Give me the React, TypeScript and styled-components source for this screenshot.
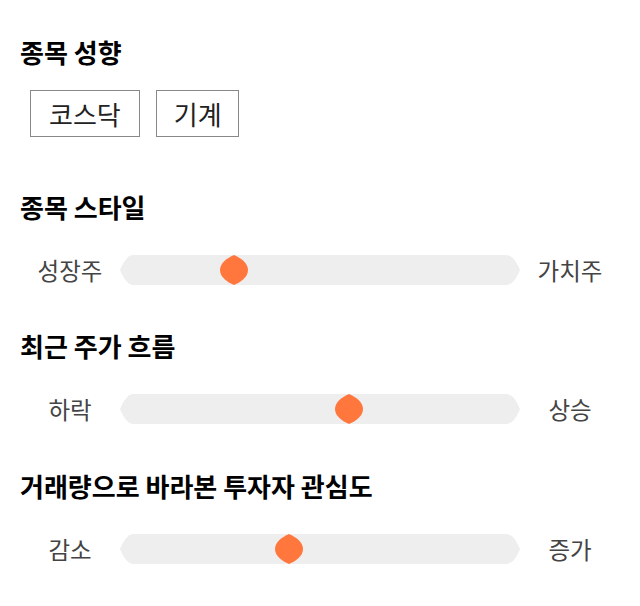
import React from 'react';
import styled, { createGlobalStyle } from 'styled-components';

const GlobalStyle = createGlobalStyle`
  html, body {
    margin: 0;
    padding: 0;
    background: #fff;
  }
  body {
    font-family: 'Noto Sans CJK KR', 'Noto Sans', sans-serif;
  }
`;

// Styles
const Page = styled.div`
  width: 600px;
  padding: 36px 20px 0;
`;

const Section = styled.section<{ $gap: number }>`
  margin-top: ${(p) => p.$gap}px;

  &:first-child {
    margin-top: 0;
  }
`;

const Title = styled.h2`
  margin: 0;
  font-size: 26px;
  line-height: 32px;
  font-weight: 700;
  color: #000;
`;

const TagList = styled.div`
  display: flex;
  gap: 16px;
  margin-top: 22px;
  padding-left: 10px;
`;

const Tag = styled.div`
  padding: 0 18px 0 18px;
  height: 47px;
  box-sizing: border-box;
  border: 1px solid #888;
  display: flex;
  align-items: center;
  font-size: 26px;
  color: #222;

  & + & {
    padding: 0 16px 0 17px;
  }
`;

const SliderRow = styled.div`
  display: grid;
  grid-template-columns: 100px 400px 100px;
  align-items: center;
  margin-top: 32px;
`;

const Side = styled.span`
  text-align: center;
  font-size: 23.5px;
  line-height: 30px;
  color: #444;
`;

const Track = styled.div`
  position: relative;
  height: 30px;
`;

const TrackFill = styled.div`
  height: 30px;
  background: #eee;
  clip-path: path('M14,0 H386 C393,0 397,8 400,15 C397,22 393,30 386,30 H14 C7,30 3,22 0,15 C3,8 7,0 14,0 Z');
`;

const Thumb = styled.div`
  position: absolute;
  top: 0;
  width: 28px;
  height: 30px;
  transform: translateX(-50%);
  background: #ff773d;
  clip-path: path('M14,0 C21,3 28,8 28,15 C28,22 21,27 14,30 C7,27 0,22 0,15 C0,8 7,3 14,0 Z');
`;

const tags = ['코스닥', '기계'];

const sliders = [
  { title: '종목 스타일', left: '성장주', right: '가치주', center: 114, gap: 54 },
  { title: '최근 주가 흐름', left: '하락', right: '상승', center: 229, gap: 45 },
  { title: '거래량으로 바라본 투자자 관심도', left: '감소', right: '증가', center: 169, gap: 46 },
];

const App: React.FC = () => {
  return (
    <Page>
      <GlobalStyle />
      <Section $gap={0}>
        <Title>종목 성향</Title>
        <TagList>
          {tags.map((t) => (
            <Tag key={t}>{t}</Tag>
          ))}
        </TagList>
      </Section>

      {sliders.map((s) => (
        <Section key={s.title} $gap={s.gap}>
          <Title>{s.title}</Title>
          <SliderRow>
            <Side>{s.left}</Side>
            <Track>
              <TrackFill />
              <Thumb style={{ left: s.center }} />
            </Track>
            <Side>{s.right}</Side>
          </SliderRow>
        </Section>
      ))}
    </Page>
  );
};

export default App;
